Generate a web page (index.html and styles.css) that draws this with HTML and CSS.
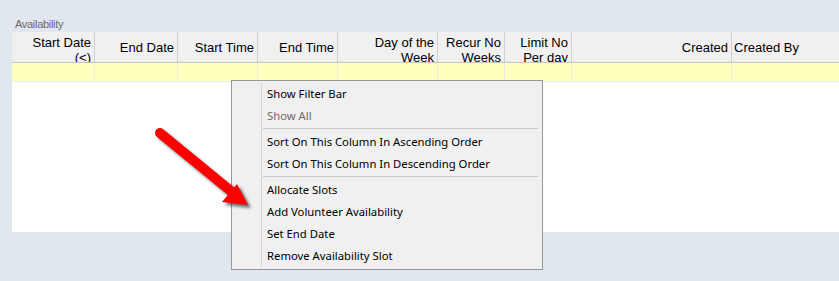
FILE: index.html
```html
<!DOCTYPE html>
<html>
<head>
<meta charset="utf-8">
<link rel="stylesheet" href="styles.css">
</head>
<body>
<div class="page">
  <div class="caption">Availability</div>
  <div class="panel">
    <div class="row head">
      <div class="cell c1 two"><span>Start Date<br>(&lt;)</span></div>
      <div class="cell c2"><span>End Date</span></div>
      <div class="cell c3"><span>Start Time</span></div>
      <div class="cell c4"><span>End Time</span></div>
      <div class="cell c5 two"><span>Day of the<br>Week</span></div>
      <div class="cell c6 two"><span>Recur No<br>Weeks</span></div>
      <div class="cell c7 two"><span>Limit No<br>Per day</span></div>
      <div class="cell c8"><span>Created</span></div>
      <div class="cell c9 left"><span>Created By</span></div>
    </div>
    <div class="row filter">
      <div class="cell c1"></div>
      <div class="cell c2"></div>
      <div class="cell c3"></div>
      <div class="cell c4"></div>
      <div class="cell c5"></div>
      <div class="cell c6"></div>
      <div class="cell c7"></div>
      <div class="cell c8"></div>
      <div class="cell c9"></div>
    </div>
  </div>

  <div class="menu">
    <div class="item">Show Filter Bar</div>
    <div class="item disabled">Show All</div>
    <div class="sep"></div>
    <div class="item">Sort On This Column In Ascending Order</div>
    <div class="item">Sort On This Column In Descending Order</div>
    <div class="sep"></div>
    <div class="item">Allocate Slots</div>
    <div class="item">Add Volunteer Availability</div>
    <div class="item">Set End Date</div>
    <div class="item">Remove Availability Slot</div>
  </div>

  <svg class="arrow" width="120" height="110" viewBox="0 0 120 110">
    <defs>
      <filter id="sh" x="-20%" y="-20%" width="150%" height="150%">
        <feGaussianBlur stdDeviation="1.6"/>
      </filter>
    </defs>
    <g transform="translate(3,3)" filter="url(#sh)" opacity="0.55">
      <line x1="20" y1="13" x2="92" y2="72" stroke="#000" stroke-width="10" stroke-linecap="round"/>
      <polygon points="108,85 82,82 97,64" fill="#000"/>
    </g>
    <line x1="20" y1="13" x2="92" y2="72" stroke="#ff0000" stroke-width="10" stroke-linecap="round"/>
    <polygon points="108,85 82,82 97,64" fill="#ff0000"/>
  </svg>
</div>
</body>
</html>
```
FILE: styles.css
```css
html, body {
  margin: 0;
  padding: 0;
}
body {
  background: #e0e7ef;
  width: 839px;
  height: 281px;
  overflow: hidden;
}
.page {
  position: relative;
  width: 839px;
  height: 281px;
}
.caption {
  height: 32px;
  box-sizing: border-box;
  padding: 18px 0 0 15px;
  font-family: "Liberation Sans", Arial, sans-serif;
  font-size: 11px;
  letter-spacing: -0.3px;
  line-height: 12px;
  color: #6a6a6a;
}
.panel {
  margin-left: 12px;
  height: 200px;
  background: #ffffff;
}
.row {
  display: flex;
}
.head {
  height: 30px;
  background: #f0f0f0;
  border-bottom: 1px solid #c6c6c6;
  font-family: "Liberation Sans", Arial, sans-serif;
  font-size: 13px;
  color: #000;
  line-height: 15px;
}
.cell {
  box-sizing: border-box;
  border-right: 1px solid #cfcfcf;
  display: flex;
  align-items: center;
  justify-content: flex-end;
  text-align: right;
  padding-right: 3px;
  overflow: hidden;
}
.head .cell.two {
  align-items: flex-start;
  padding-top: 3px;
}
.head .cell.left {
  justify-content: flex-start;
  text-align: left;
  padding-left: 2px;
  border-right: none;
}
.c1 { width: 83px; }
.c2 { width: 83px; }
.c3 { width: 80px; }
.c4 { width: 80px; }
.c5 { width: 100px; }
.c6 { width: 67px; }
.c7 { width: 67px; }
.c8 { width: 160px; }
.c9 { flex: 1; }
.filter {
  height: 18px;
  background: #ffffbe;
  border-bottom: 1px solid #ebebeb;
}
.filter .cell {
  border-right: 1px solid #ececd6;
}
.filter .c9 { border-right: none; }

.menu {
  position: absolute;
  left: 231px;
  top: 80px;
  width: 312px;
  box-sizing: border-box;
  background: #f0f0f0;
  border: 1px solid #979797;
  padding: 2px;
  font-family: "Noto Sans", "Open Sans", sans-serif;
  font-size: 11.3px;
  color: #000;
}
.menu::before {
  content: "";
  position: absolute;
  left: 29px;
  top: 2px;
  bottom: 2px;
  width: 1px;
  background: #d4d4d4;
}
.item {
  height: 22px;
  line-height: 22px;
  padding-left: 33px;
  white-space: nowrap;
}
.item.disabled {
  color: #6d6d6d;
}
.sep {
  height: 1px;
  margin: 1px 2px 2px 29px;
  background: #c8c8c8;
}
.arrow {
  position: absolute;
  left: 140px;
  top: 120px;
}
```
